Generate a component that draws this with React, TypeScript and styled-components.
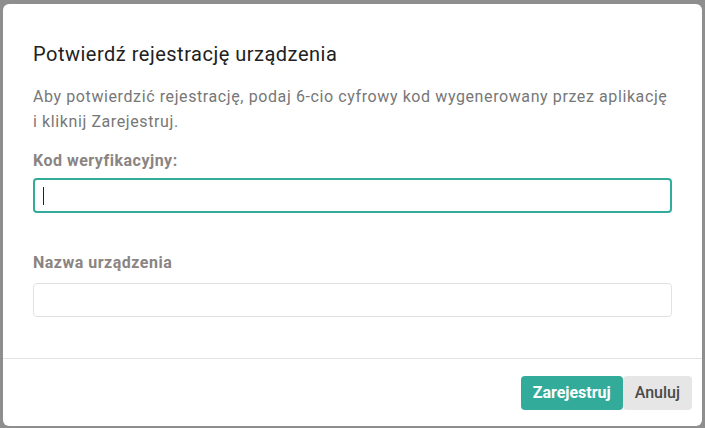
import React from 'react';
import styled, { createGlobalStyle } from 'styled-components';

const GlobalStyle = createGlobalStyle`
  html, body {
    margin: 0;
    padding: 0;
    background: #8e8e8e;
    font-family: Roboto, "Noto Sans", Arial, sans-serif;
  }
`;

const Backdrop = styled.div`
  width: 705px;
  height: 428px;
  padding: 4px 3px 2px 3px;
  box-sizing: border-box;
  background: #8e8e8e;
`;

const Modal = styled.div`
  width: 699px;
  height: 422px;
  background: #fff;
  border-radius: 6px;
  display: flex;
  flex-direction: column;
  box-sizing: border-box;
  overflow: hidden;
`;

const Body = styled.div`
  padding: 38px 30px 0 30px;
  height: 355px;
  box-sizing: border-box;
  border-bottom: 1px solid #e3e3e3;
`;

const Title = styled.h2`
  margin: 0;
  font-size: 20px;
  line-height: 24px;
  font-weight: 400;
  letter-spacing: 0.5px;
  color: #212121;
`;

const Description = styled.p`
  margin: 18px 0 0 0;
  font-size: 16px;
  line-height: 25px;
  color: #777;
  letter-spacing: 0.6px;
`;

const Label = styled.label<{ $gap: number }>`
  display: block;
  margin-top: ${(p) => p.$gap}px;
  font-size: 16px;
  line-height: 20px;
  font-weight: 700;
  letter-spacing: 0.5px;
  color: #8a8482;
`;

const Field = styled.div<{ $gap: number }>`
  position: relative;
  margin-top: ${(p) => p.$gap}px;
`;

const Input = styled.input<{ $focused?: boolean }>`
  display: block;
  width: 100%;
  box-sizing: border-box;
  height: ${(p) => (p.$focused ? 35 : 34)}px;
  padding: 0 10px;
  font-family: inherit;
  font-size: 16px;
  color: #333;
  background: #fff;
  border-radius: 4px;
  border: ${(p) => (p.$focused ? '2px solid #33ab9b' : '1px solid #e2e2e2')};
  outline: none;
  caret-color: transparent;
`;

const Caret = styled.span`
  position: absolute;
  left: 10px;
  top: 9px;
  width: 1px;
  height: 18px;
  background: #222;
`;

const Footer = styled.div`
  flex: 1;
  display: flex;
  justify-content: flex-end;
  align-items: center;
  padding: 0 10px 0 0;
`;

const Button = styled.button<{ $primary?: boolean }>`
  height: 34px;
  padding: 0 12px;
  border: none;
  border-radius: 4px;
  font-family: inherit;
  font-size: 16px;
  font-weight: ${(p) => (p.$primary ? 700 : 500)};
  color: ${(p) => (p.$primary ? '#fff' : '#4a4a4a')};
  background: ${(p) => (p.$primary ? '#33ab9b' : '#e6e6e6')};
  cursor: pointer;
`;

const App: React.FC = () => {
  return (
    <>
      <GlobalStyle />
      <Backdrop>
        <Modal>
          <Body>
            <Title>Potwierdź rejestrację urządzenia</Title>
            <Description>
              Aby potwierdzić rejestrację, podaj 6-cio cyfrowy kod wygenerowany przez aplikację
              <br />i kliknij Zarejestruj.
            </Description>
            <Label $gap={17}>Kod weryfikacyjny:</Label>
            <Field $gap={7}>
              <Input $focused />
              <Caret />
            </Field>
            <Label $gap={40}>Nazwa urządzenia</Label>
            <Field $gap={10}>
              <Input />
            </Field>
          </Body>
          <Footer>
            <Button $primary>Zarejestruj</Button>
            <Button>Anuluj</Button>
          </Footer>
        </Modal>
      </Backdrop>
    </>
  );
};

export default App;
